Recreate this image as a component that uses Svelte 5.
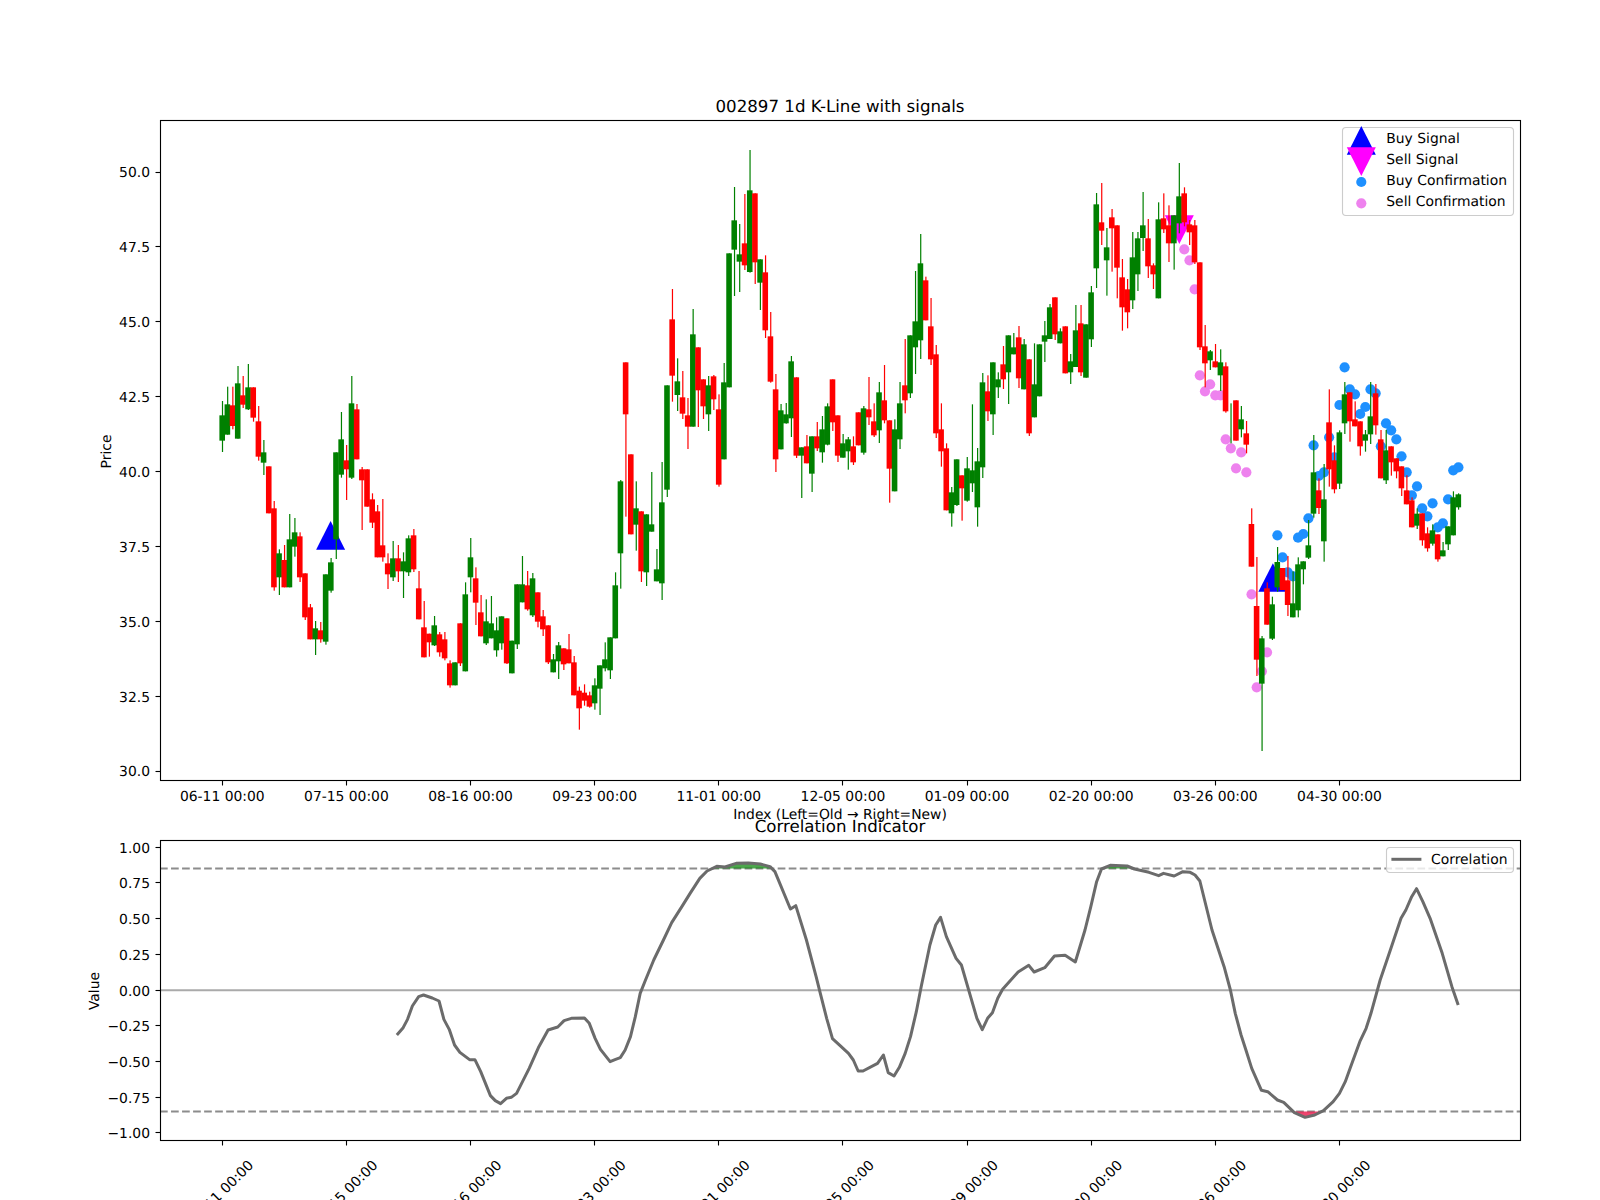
<script>
  // Figure geometry, following the matplotlib layout of the chart
  const STEP = 5.172;
  const X0 = 222.3;
  const xAt = (i) => X0 + STEP * i;
  const priceY = (p) => 172 + (50 - p) * 29.95;
  const corrY = (v) => 990 - 142.857 * v;
  const snap = (v) => Math.floor(v) + 0.5;

  const sections = [
    { y0: 340, rows: [
      [0,226,302,183,336],[0,193,284,140,284],[1,196,258,140,268],[0,130,296,78,296],[1,166,194,108,204],
      [0,142,208,72,210],[1,142,233,142,245],[1,244,350,198,362],[0,337,368,300,405],[1,379,520,379,520],
      [1,505,742,483,752],[0,640,712,628,765],[1,660,742,615,742],[0,598,742,522,742],[0,577,620,534,650],
      [1,589,712,577,726],[1,700,832,700,840],[1,802,898,792,898],[0,865,898,843,945],[1,871,898,846,908],
      [0,703,905,703,914],[0,667,752,654,758],[0,337,598,337,657],[0,298,404,216,413],[1,361,388,315,480],
      [0,190,413,108,417],[1,208,358,192,358],[1,388,421,381,570],[1,388,500,388,500],[1,478,548,460,564],
      [1,514,652,495,652],[1,616,652,477,665],[1,670,703,640,747],[0,655,712,603,723],[1,655,694,615,726],
      [0,664,694,637,774],[0,595,697,586,708],[1,586,688,567,696],[1,745,838,693,838],[1,862,952,783,952],
      [1,881,907,881,950],[0,856,916,828,918],[1,883,937,876,950],[1,898,955,876,961],[1,970,1036,961,1043],
      [0,967,1036,967,1036],[1,850,970,850,978],[0,763,994,727,994],[0,652,712,594,757],[1,715,788,682,855],
      [1,817,889,765,889],[0,844,910,778,915],[0,850,895,768,895],[0,871,931,832,950],[0,829,910,829,929],
      [1,835,970,835,972],[0,902,1000,902,1000],[0,733,913,733,927],[0,733,787,648,787],[1,736,808,693,812],
      [0,715,826,699,831],[1,757,845,757,862],[1,829,868,810,888],[1,856,967,856,972],[0,958,997,942,997],
      [0,916,964,906,1017],[1,925,973,925,990],[1,928,970,882,970],[1,967,1066,948,1066],[1,1052,1105,1040,1169],
      [1,1058,1082,1033,1097],[1,1066,1100,1055,1103],[0,1036,1090,1015,1109],[0,976,1046,976,1125],[0,958,985,907,994],
      [0,892,991,892,1017],[0,736,895,697,895],[0,424,640,420,746],[1,67,223,67,530],[1,343,583,343,583],
      [0,505,554,424,632],[1,514,694,514,726],[0,523,697,523,738]
    ]},
    { y0: 130, rows: [
      [0,1183,1205,1026,1205],[0,1318,1354,1257,1354],[0,1117,1360,996,1410],[0,766,1079,766,1101],[1,568,737,477,815],
      [0,754,795,685,843],[1,802,851,723,867],[1,856,890,804,957],[0,613,890,537,890],[1,652,781,652,891],
      [1,748,829,748,867],[0,766,853,738,903],[1,739,808,735,840],[1,838,1064,793,1070],[0,757,988,699,988],
      [0,370,772,370,772],[0,271,359,171,498],[0,373,395,282,486],[1,340,406,192,420],[0,181,426,60,428],
      [1,190,397,190,462],[0,388,458,388,540],[1,427,601,376,624],[1,619,755,546,758],[1,778,988,732,1026],
      [0,841,958,822,958],[0,853,880,819,881],[0,694,865,678,921],[1,742,977,742,984],[0,952,977,952,1104],
      [1,949,1000,915,1000],[0,919,1031,919,1086],[1,919,955,876,963],[0,898,967,858,998],[0,829,944,820,946],
      [1,748,877,748,903],[1,856,977,856,996],[0,940,983,912,983],[0,928,964,921,1019],[1,949,997,919,1005],
      [1,847,946,847,946],[0,835,968,828,974],[1,838,862,741,885],[1,874,916,820,921],[0,787,901,756,939],
      [1,811,871,705,880],[1,871,1016,871,1118],[0,898,1084,868,1084],[0,820,928,756,957],[1,766,811,627,850],
      [0,616,790,616,804],[0,574,652,423,732],[0,400,631,312,687],[1,451,571,440,571],[1,589,688,504,705],
      [1,673,910,645,924],[1,898,964,820,1010],[1,955,1141,940,1141],[0,1087,1150,1071,1190],[0,988,1125,988,1128],
      [1,1036,1075,1036,1172],[0,1015,1112,981,1115],[0,1021,1060,823,1086],[0,994,1132,954,1190],[0,757,1012,729,1044],
      [1,784,844,736,873],[0,697,853,697,915],[0,748,772,727,804],[1,703,748,648,777],[0,616,727,616,822],
      [0,652,673,609,673],[1,622,745,588,774],[0,643,778,627,778],[1,688,910,688,918],[0,763,862,640,862],
      [0,643,799,643,799],[0,616,635,573,696],[0,532,627,522,627],[1,502,613,502,630]
    ]},
    { y0: 110, rows: [
      [0,664,700,655,700],[1,649,790,649,790],[0,754,787,732,822],[0,661,771,585,771],[1,640,787,585,798],
      [0,643,803,643,803],[0,547,688,528,711],[0,283,475,249,534],[1,337,362,219,405],[0,412,451,354,557],
      [1,322,355,297,485],[1,346,473,346,565],[1,502,592,447,662],[1,538,607,507,655],[0,442,571,366,597],
      [0,385,493,366,543],[0,346,384,246,423],[1,385,469,327,504],[1,466,493,460,537],[0,328,565,277,565],
      [1,325,358,250,369],[1,346,400,286,456],[0,316,400,316,479],[0,259,340,159,370],[1,250,337,232,349],
      [1,343,367,330,405],[1,346,457,330,462],[1,457,712,457,720],[1,709,760,645,832],[0,724,751,720,780],
      [1,754,772,702,772],[0,757,796,718,843],[1,769,904,757,908]
    ]},
    { y0: 350, rows: [
      [0,220,220,160,280],[1,151,272,151,272],[0,208,238,168,262],[1,250,284,213,310],[1,522,650,475,650],
      [1,768,929,621,978],[0,865,1001,858,1203],[1,715,824,697,824],[0,763,866,740,870],[0,636,712,591,725],
      [1,654,720,654,720],[1,691,765,618,798],[0,760,802,664,802],[0,643,781,622,802],[0,634,658,634,703],
      [0,586,623,510,627],[0,367,491,255,503],[1,421,474,385,492],[0,448,574,342,635],[1,217,358,118,410],
      [1,331,418,286,430],[0,247,401,241,417],[0,133,220,96,252],[1,127,214,127,275],[1,208,229,154,229],
      [1,214,289,214,317],[0,253,272,240,305],[0,199,253,96,282],[1,130,226,102,254],[1,268,385,240,385],
      [0,301,391,240,402],[1,289,337,289,377],[1,325,364,325,385],[1,349,415,349,438],[1,421,463,376,463],
      [1,451,532,442,532],[0,491,527,475,537],[1,490,571,490,587],[1,550,595,532,605],[0,541,581,523,587],
      [1,553,628,553,635],[0,601,619,576,619],[0,529,583,529,600],[0,442,556,424,556],[0,433,472,430,479]
    ]}
  ];

  const candles = sections.flatMap((s) =>
    s.rows.map((r) => ({
      down: r[0] === 1,
      top: s.y0 + r[1] / 3,
      bottom: s.y0 + r[2] / 3,
      high: s.y0 + r[3] / 3,
      low: s.y0 + r[4] / 3
    }))
  ).map((c, i) => ({ ...c, x: xAt(i) }));

  const dotY = (v) => 350 + v / 3;
  const buyDots = [556,622,667,679,563,552,505,286,378,367,262,322,165,52,118,133,192,171,118,130,289,220,241,268,319,367,436,409,475,499,460,532,520,448,361,352]
    .map((v, k) => ({ x: xAt(204 + k), y: dotY(v) }));
  const sellDots = [-302,-269,-182,76,124,103,136,136,268,295,355,307,367,733,1012,964,907]
    .map((v, k) => ({ x: xAt(186 + k), y: dotY(v) }));

  const up = (x, apex, base, half = 14.5) => `${x},${apex} ${x - half},${base} ${x + half},${base}`;
  const down = (x, top, apex, half = 14.5) => `${x - half},${top} ${x + half},${top} ${x},${apex}`;

  const dates = ['06-11','07-15','08-16','09-23','11-01','12-05','01-09','02-20','03-26','04-30']
    .map((d, k) => ({ label: `${d} 00:00`, x: xAt(24 * k) }));
  const priceTicks = [30,32.5,35,37.5,40,42.5,45,47.5,50].map((p) => ({ label: p.toFixed(1), y: priceY(p) }));
  const corrTicks = [-1,-0.75,-0.5,-0.25,0,0.25,0.5,0.75,1].map((v) => ({
    label: (v < 0 ? '\u2212' : '') + Math.abs(v).toFixed(2),
    y: corrY(v)
  }));

  const XS = 1568 / 760;
  const left = [695,795,708,773,717,748,727,708,740,680,750,675,768,684,782,693,792,748,803,778,814,825,825,847,845,869,856,869,868,905,888,977,898,992,909,1001,921,985,931,982,942,970,968,895,988,830,1007,780,1027,771,1040,752,1055,745,1082,744,1092,760,1104,805,1115,838,1135,875,1145,869,1156,863,1166,840,1177,800,1187,740,1197,670,1208,630,1225,570,1245,510,1262,458,1282,412,1300,370,1320,325,1335,303,1355,289,1372,291,1395,280,1420,279,1445,282,1465,290,1475,305,1507,417,1518,407,1540,510,1560,620];
  const right = [41,665,55,745,67,806,85,830,100,850,110,870,120,903,130,903,160,880,172,855,182,908,194,918,205,892,217,850,228,800,240,725,250,650,268,525,280,465,290,442,302,500,322,565,333,585,350,670,365,745,376,779,387,745,397,728,408,685,418,658,450,606,472,586,483,606,505,593,525,558,547,556,568,576,588,480,600,410,612,335,622,297,640,286,675,288,690,297,720,307,740,317,750,310,772,318,790,305,805,307,815,315,825,333,850,480,875,590,888,660,898,730,910,795,920,840,932,895,952,961,965,965,985,990,998,997,1020,1028,1042,1042,1062,1035,1080,1022,1100,995,1113,970,1125,935,1135,895,1155,815,1168,775,1178,730,1197,630,1218,540,1240,445,1250,420,1262,380,1272,356,1285,395,1300,445,1325,550,1345,650,1358,705];
  const toPoints = (arr, x0) => {
    const out = [];
    for (let i = 0; i < arr.length; i += 2) out.push([x0 + arr[i] / XS, 770 + arr[i + 1] / 3]);
    return out;
  };
  const linePts = [...toPoints(left, 60), ...toPoints(right, 800)];
  const linePath = linePts.map((p) => p.join(',')).join(' ');

  // Runs of the line beyond a threshold, closed along the threshold
  function regions(pts, level, beyond) {
    const result = [];
    let run = null;
    for (let i = 0; i < pts.length; i++) {
      const inside = beyond(pts[i][1]);
      if (i > 0 && inside !== beyond(pts[i - 1][1])) {
        const [ax, ay] = pts[i - 1];
        const [bx, by] = pts[i];
        const cross = [ax + ((level - ay) / (by - ay)) * (bx - ax), level];
        if (inside) run = [cross];
        else if (run) {
          run.push(cross);
          result.push(run.map((p) => p.join(',')).join(' '));
          run = null;
        }
      }
      if (inside && run) run.push(pts[i]);
    }
    return result;
  }
  const hiY = corrY(0.85);
  const loY = corrY(-0.85);
  const hiFill = regions(linePts, hiY, (y) => y < hiY);
  const loFill = regions(linePts, loY, (y) => y > loY);
</script>

<div class="figure">
  <svg width="1600" height="1200" viewBox="0 0 1600 1200">
    <rect class="plot" x="160" y="120" width="1360" height="660" />

    <polygon class="buy" points={up(330.6, 521, 549.7)} />
    <polygon class="buy" points={up(1272.9, 563.3, 591.7)} />
    <polygon class="sell" points={down(1179.3, 215.3, 244)} />
    {#each buyDots as d}<circle class="buy-dot" cx={d.x} cy={d.y} r="5.1" />{/each}
    {#each sellDots as d}<circle class="sell-dot" cx={d.x} cy={d.y} r="5.1" />{/each}

    {#each candles as c}
      <g class={c.down ? 'red' : 'green'}>
        <rect x={c.x - 0.4} y={c.high} width="1.2" height={c.low - c.high} />
        <rect x={c.x - 2.9} y={c.top} width="5.6" height={c.bottom - c.top} />
      </g>
    {/each}

    <rect class="frame" x="160.5" y="120.5" width="1360" height="660" />
    {#each dates as d}
      <line class="tick" x1={snap(d.x)} x2={snap(d.x)} y1="780.5" y2="785.5" />
      <text class="label" x={d.x} y="800.7" text-anchor="middle">{d.label}</text>
    {/each}
    {#each priceTicks as t}
      <line class="tick" x1="155.5" x2="160.5" y1={snap(t.y)} y2={snap(t.y)} />
      <text class="label" x="150" y={t.y + 5.4} text-anchor="end">{t.label}</text>
    {/each}

    <text class="title" x="840" y="111.7" text-anchor="middle">002897 1d K-Line with signals</text>
    <text class="label" x="840" y="818.5" text-anchor="middle">Index (Left=Old → Right=New)</text>
    <text class="label" transform="rotate(-90 110.7 451.5)" x="110.7" y="451.5" text-anchor="middle">Price</text>

    <rect class="legend" x="1342.5" y="127.5" width="171" height="88" rx="3.5" />
    <polygon class="buy" points={up(1361.3, 126, 154.7)} />
    <polygon class="sell" points={down(1361.3, 147.3, 176)} />
    <circle class="buy-dot" cx="1361.3" cy="182" r="5.1" />
    <circle class="sell-dot" cx="1361.3" cy="203.3" r="5.1" />
    <text class="label" x="1386.3" y="143.3">Buy Signal</text>
    <text class="label" x="1386.3" y="164.3">Sell Signal</text>
    <text class="label" x="1386.3" y="185.3">Buy Confirmation</text>
    <text class="label" x="1386.3" y="206.3">Sell Confirmation</text>

    <rect class="plot" x="160" y="840" width="1360" height="300" />
    <line class="zero" x1="160" x2="1520" y1={corrY(0) + 0.3} y2={corrY(0) + 0.3} />
    <line class="limit" x1="160" x2="1520" y1={hiY} y2={hiY} />
    <line class="limit" x1="160" x2="1520" y1={loY} y2={loY} />
    {#each hiFill as p}<polygon class="fill-hi" points={p} />{/each}
    {#each loFill as p}<polygon class="fill-lo" points={p} />{/each}
    <polyline class="corr" points={linePath} />

    <rect class="frame" x="160.5" y="840.5" width="1360" height="300" />
    {#each dates as d}
      <line class="tick" x1={snap(d.x)} x2={snap(d.x)} y1="1140.5" y2="1145.5" />
      <text class="label" transform="rotate(-45 {d.x + 2} 1196)" x={d.x + 2} y="1196" text-anchor="middle">{d.label}</text>
    {/each}
    {#each corrTicks as t}
      <line class="tick" x1="155.5" x2="160.5" y1={snap(t.y)} y2={snap(t.y)} />
      <text class="label" x="150" y={t.y + 5.6} text-anchor="end">{t.label}</text>
    {/each}

    <text class="title" x="840" y="831.7" text-anchor="middle">Correlation Indicator</text>
    <text class="label" transform="rotate(-90 98.6 991)" x="98.6" y="991" text-anchor="middle">Value</text>

    <rect class="legend" x="1386.5" y="847.5" width="127" height="25" rx="3.5" />
    <line class="corr" x1="1391.4" x2="1421.4" y1="859.3" y2="859.3" />
    <text class="label" x="1431" y="864">Correlation</text>
  </svg>
</div>

<style>
  :global(body) {
    margin: 0;
    background: #fff;
  }
  .figure {
    width: 1600px;
    height: 1200px;
    overflow: hidden;
  }
  svg {
    display: block;
    font-family: "DejaVu Sans", sans-serif;
    text-rendering: geometricPrecision;
  }
  .plot {
    fill: #fff;
  }
  .frame {
    fill: none;
    stroke: #000;
    stroke-width: 1.11;
  }
  .tick {
    stroke: #000;
    stroke-width: 1.11;
  }
  .label {
    font-size: 13.89px;
    fill: #000;
  }
  .title {
    font-size: 16.67px;
    fill: #000;
  }
  .green rect {
    fill: #008000;
  }
  .red rect {
    fill: #ff0000;
  }
  .buy {
    fill: #0000ff;
  }
  .sell {
    fill: #ff00ff;
  }
  .buy-dot {
    fill: #1e90ff;
  }
  .sell-dot {
    fill: #ee82ee;
  }
  .legend {
    fill: #fff;
    fill-opacity: 0.8;
    stroke: #ccc;
    stroke-width: 1.11;
  }
  .zero {
    stroke: #aaa;
    stroke-width: 2.1;
  }
  .limit {
    stroke: #8c8c8c;
    stroke-width: 2.08;
    stroke-dasharray: 7.7 3.33;
  }
  .corr {
    fill: none;
    stroke: #6b6b6b;
    stroke-width: 3;
    stroke-linejoin: round;
  }
  .fill-hi {
    fill: #008000;
    fill-opacity: 0.7;
  }
  .fill-lo {
    fill: #e8174a;
    fill-opacity: 0.8;
  }
</style>
